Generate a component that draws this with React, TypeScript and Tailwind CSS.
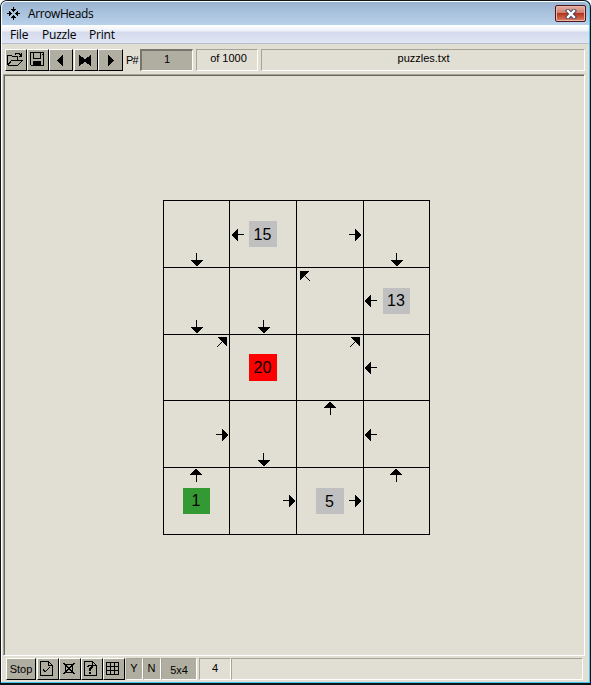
import React from "react";

type Dir = "up" | "down" | "left" | "right" | "ne" | "nw";
type Cell = { dir?: Dir; x?: number; y?: number; label?: string; box?: string };

const GRAY = "ml-[19px] mt-5 h-[26px] w-7 pt-px bg-[#c0c0c0]";

const CELLS: Cell[] = [
  { dir: "down", x: 27, y: 52 },
  { dir: "left", x: 2, y: 28, label: "15", box: GRAY },
  { dir: "right", x: 52, y: 28 },
  { dir: "down", x: 27, y: 52 },
  { dir: "down", x: 27, y: 52 },
  { dir: "down", x: 28, y: 52 },
  { dir: "nw", x: 3, y: 3 },
  { dir: "left", x: 1, y: 27, label: "13", box: "ml-[19px] mt-5 h-[26px] w-[27px] bg-[#c0c0c0]" },
  { dir: "ne", x: 53, y: 2 },
  { label: "20", box: "ml-[19px] mt-[19px] h-[27px] w-7 bg-[#ff0000]" },
  { dir: "ne", x: 53, y: 2 },
  { dir: "left", x: 1, y: 27 },
  { dir: "right", x: 52, y: 28 },
  { dir: "down", x: 28, y: 52 },
  { dir: "up", x: 27, y: 1 },
  { dir: "left", x: 1, y: 28 },
  { dir: "up", x: 26, y: 1, label: "1", box: "ml-[19px] mt-5 h-[26px] w-[27px] bg-[#339933]" },
  { dir: "right", x: 53, y: 27 },
  { dir: "right", x: 52, y: 27, label: "5", box: GRAY },
  { dir: "up", x: 26, y: 1 },
];

const ARROWS: Record<Dir, string> = {
  down: "M5 0h1v7h-1z M0 7h12v1h-1v1h-1v1h-1v1h-1v1h-1v1h-2v-1h-1v-1h-1v-1h-1v-1h-1v-1h-1z",
  up: "M6 6h1v7h-1z M5 0h2v1h1v1h1v1h1v1h1v1h1v1h-12v-1h1v-1h1v-1h1v-1h1v-1h1z",
  right: "M0 5h6v1h-6z M6 0h1v1h1v1h1v1h1v1h1v1h1v2h-1v1h-1v1h-1v1h-1v1h-1v1h-1z",
  left: "M6 5h6v1h-6z M6 0v12h-1v-1h-1v-1h-1v-1h-1v-1h-1v-1h-1v-2h1v-1h1v-1h1v-1h1v-1h1v-1z",
  ne: "M1 0h9v9h-1v-1h-1v-1h-1v-1h-1v-1h-1v-1h-1v-1h-1v-1h-1v-1h-1z M4 5h1v1h-1z M3 6h1v1h-1z M2 7h1v1h-1z M1 8h1v1h-1z M0 9h1v1h-1z",
  nw: "M0 0h9v1h-1v1h-1v1h-1v1h-1v1h-1v1h-1v1h-1v1h-1v1h-1z M5 5h1v1h-1z M6 6h1v1h-1z M7 7h1v1h-1z M8 8h1v1h-1z M9 9h1v1h-1z",
};

function Arrow({ dir, x, y }: { dir: Dir; x: number; y: number }) {
  return (
    <svg className="absolute" style={{ left: x, top: y }} width="13" height="13" shapeRendering="crispEdges">
      <path d={ARROWS[dir]} />
    </svg>
  );
}

function Board() {
  return (
    <div className="grid grid-cols-[66px_67px_67px_66px] grid-rows-[67px_67px_66px_67px_67px] border-r border-b border-black">
      {CELLS.map((c, i) => (
        <div key={i} className="relative border-t border-l border-black">
          {c.label && (
            <div className={`flex items-center justify-center pr-px text-[16px] leading-none ${c.box}`}>{c.label}</div>
          )}
          {c.dir && <Arrow dir={c.dir} x={c.x!} y={c.y!} />}
        </div>
      ))}
    </div>
  );
}

function Btn({ className, children }: { className: string; children: React.ReactNode }) {
  return (
    <button
      className={`flex shrink-0 overflow-hidden border border-t-white border-l-white border-r-black border-b-black bg-[#b0aea0] ${className}`}
    >
      {children}
    </button>
  );
}

function Panel({ className, children }: { className: string; children?: React.ReactNode }) {
  return (
    <div
      className={`flex justify-center border border-t-[#a5a396] border-l-[#a5a396] border-r-white border-b-white ${className}`}
    >
      {children}
    </div>
  );
}

function Icon({ d, fill }: { d?: string; fill?: string }) {
  return (
    <svg width="20" height="20" className="shrink-0" shapeRendering="crispEdges" fill="none" stroke="black">
      {d && <path d={d} />}
      {fill && <path d={fill} fill="black" stroke="none" />}
    </svg>
  );
}

const PAGE = "M2.5 1.5h8l4 4v10h-12z M10.5 1.5v4h4";

export default function App() {
  return (
    <div className="h-[685px] w-[591px] overflow-hidden bg-white font-['Liberation_Sans',Arial,sans-serif] text-[11px] text-black">
      <div className="flex h-full flex-col rounded-t-[7px] border border-b-2 border-[#101318] bg-[#42c8ee] pr-px pb-px">
        <div className="flex min-h-0 flex-1 flex-col overflow-hidden rounded-t-[6px] border-t border-l border-white bg-[#e1dfd3]">
          <header className="flex h-[23px] shrink-0 items-start bg-gradient-to-b from-[#9ab4d0] to-[#b9d1ea] pl-[5px]">
            <svg width="13" height="13" className="mt-[5px]" shapeRendering="crispEdges">
              <path d="M6 0h1v2h2v1h-1v1h-1v1h-1v-1h-1v-1h-1v-1h2z M6 13h1v-2h2v-1h-1v-1h-1v-1h-1v1h-1v1h-1v1h2z M0 6v1h2v2h1v-1h1v-1h1v-1h-1v-1h-1v-1h-1v2z M13 6v1h-2v2h-1v-1h-1v-1h-1v-1h1v-1h1v-1h1v2z" />
            </svg>
            <h1 className="mt-[3px] ml-2 font-['Open_Sans','Noto_Sans',sans-serif] text-[12px] leading-[17px] tracking-[-0.4px]">
              ArrowHeads
            </h1>
            <button className="mt-[3px] mr-[3px] ml-auto flex h-[17px] w-[31px] items-center justify-center rounded-[2px] border border-[#4d1722] bg-gradient-to-b from-[#e0a596] from-10% via-[#cf8072] via-45% to-[#d0634b] shadow-[inset_0_0_0_1px_#e9b6a9]">
              <span className="flex h-[13px] w-[27px] items-center justify-center bg-gradient-to-b from-transparent from-45% via-[#b5321c] via-50% to-[#d47456]">
                <svg width="12" height="10">
                  <path d="M3 2l6 6M9 2l-6 6" stroke="#44495c" strokeWidth="4.4" strokeLinecap="square" />
                  <path d="M3 2l6 6M9 2l-6 6" stroke="white" strokeWidth="2.4" strokeLinecap="square" />
                </svg>
              </span>
            </button>
          </header>
          <nav className="flex h-[19px] shrink-0 border-b border-[#b8bdca] bg-[linear-gradient(to_bottom,#ffffff_0px,#edf0f8_6px,#d5dbee_7px,#e0e5f4_18px)] pl-2 font-['Open_Sans','Noto_Sans',sans-serif] text-[12px] leading-[20px] tracking-[-0.2px]">
            <span className="w-8">File</span>
            <span className="w-[47px]">Puzzle</span>
            <span>Print</span>
          </nav>
          <div className="mt-[5px] flex h-[22px] shrink-0 pl-[3px]">
            <Btn className="w-[22px]">
              <Icon d="M1.5 15v-9.5h4l1 1h5v3 M1.5 15.5h10l5-5h-11l-4 5 M9 4.5l1-1h3l2 2 M15.5 3v3 M13 6.5h3" />
            </Btn>
            <Btn className="w-[22px]">
              <Icon d="M2.5 2.5h13v13h-12l-1-1z M5.5 2.5v6h7v-6" fill="M5 11h8v5h-8z M14 4h1v1h-1z" />
            </Btn>
            <Btn className="w-6">
              <Icon fill="M13 4.5v12l-6-6z" />
            </Btn>
            <Btn className="ml-px w-6">
              <Icon fill="M4 4.5l6 5l6-5v12l-6-5l-6 5z" />
            </Btn>
            <Btn className="w-[25px]">
              <Icon fill="M9 4.5v12l6-6z" />
            </Btn>
            <span className="w-[17px] pl-[3px] leading-[22px] tracking-[-0.8px]">P#</span>
            <div className="flex h-[22px] w-[53px] justify-center border-t-2 border-r border-b border-l-2 border-t-[#77756b] border-r-white border-b-white border-l-[#77756b] bg-[#b0aea0] leading-[17px]">
              1
            </div>
            <Panel className="ml-[3px] w-[62px] pl-[3px] leading-[17px]">of 1000</Panel>
            <Panel className="ml-[3px] w-[324px] pl-px leading-[17px]">puzzles.txt</Panel>
          </div>
          <main className="mt-[3px] mr-1 ml-px flex h-[582px] shrink-0 items-start border border-t-[#a5a396] border-r-white border-b-white border-l-[#a5a396]">
            <div className="h-full w-full border-t border-l border-[#68675f] pt-[124px] pl-[158px]">
              <div className="w-[267px]">
                <Board />
              </div>
            </div>
          </main>
          <footer className="mt-[2px] flex h-[22px] shrink-0 pl-1">
            <Btn className="w-[30px] items-center justify-center">Stop</Btn>
            <Btn className="ml-px w-[22px] pt-px">
              <Icon d={PAGE} fill="M5 9h1v1h1v1h1v-1h1v-1h1v-1h1v-1h1v1h-1v1h-1v1h-1v1h-1v1h-2v-1h-1v-1h-1z" />
            </Btn>
            <Btn className="w-[22px] pt-px">
              <Icon d="M5.5 4.5h7v8h-7z M3.5 3l11 11 M14.5 3l-11 11 M3 3.5h2 M13 3.5h2 M3 13.5h2 M13 13.5h2" />
            </Btn>
            <Btn className="w-[22px] pt-px">
              <Icon d={PAGE} fill="M6 5h4v1h1v2h-1v1h-1v2h-2v-3h1v-1h1v-1h-2v1h-2v-1h1z M7 12h2v2h-2z" />
            </Btn>
            <Btn className="w-[22px] pt-px">
              <Icon d="M2.5 2.5h12v12h-12z M6.5 2v13 M10.5 2v13 M2 6.5h13 M2 10.5h13" />
            </Btn>
            <Panel className="ml-px w-[17px] border-r-[#a5a396] bg-[#b0aea0] pr-px leading-[19px]">Y</Panel>
            <Panel className="w-[18px] bg-[#b0aea0] pr-px leading-[19px]">N</Panel>
            <Panel className="w-9 bg-[#b0aea0] leading-[22px]">5x4</Panel>
            <Panel className="ml-[2px] w-8 leading-[19px]">4</Panel>
            <Panel className="w-[352px]" />
          </footer>
        </div>
      </div>
    </div>
  );
}
